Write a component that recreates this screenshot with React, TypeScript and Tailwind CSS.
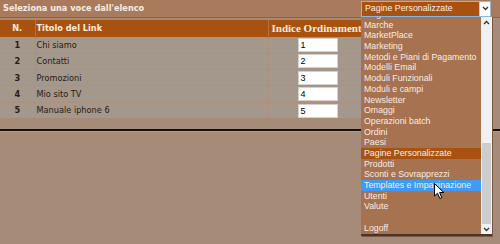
const rows = [
  { n: 1, title: 'Chi siamo' },
  { n: 2, title: 'Contatti' },
  { n: 3, title: 'Promozioni' },
  { n: 4, title: 'Mio sito TV' },
  { n: 5, title: 'Manuale iphone 6' },
];

const items = [
  'Magazzino',
  'Marche',
  'MarketPlace',
  'Marketing',
  'Metodi e Piani di Pagamento',
  'Modelli Email',
  'Moduli Funzionali',
  'Moduli e campi',
  'Newsletter',
  'Omaggi',
  'Operazioni batch',
  'Ordini',
  'Paesi',
  'Pagine Personalizzate',
  'Prodotti',
  'Sconti e Sovrapprezzi',
  'Templates e Impaginazione',
  'Utenti',
  'Valute',
  '',
  'Logoff',
];

const Chevron = ({ up = false }: { up?: boolean }) => (
  <svg width="7" height="5" viewBox="0 0 7 5" className={up ? 'rotate-180' : ''}>
    <path d="M1 1 L3.5 3.5 L6 1" fill="none" stroke="#333" strokeWidth="1.3" />
  </svg>
);

const Cursor = () => (
  <svg width="11" height="17" viewBox="0 0 11 17">
    <path d="M0.5 0.5 L0.5 13 L3.5 10.2 L5.8 15.5 L7.8 14.6 L5.6 9.5 L9.8 9.5 Z" fill="#fff" stroke="#000" strokeWidth="1" />
  </svg>
);

export default function App() {
  return (
    <div className="relative w-[500px] h-[244px] overflow-hidden bg-[#a68b78] font-['DejaVu_Sans',sans-serif]">
      {/* barra titolo */}
      <div className="h-[18px] flex items-center justify-between bg-[#a97b5c] border-b border-[#8d6248]">
        <span className="pl-[3px] text-[8.2px] font-bold text-[#f6ede6]">Seleziona una voce dall'elenco</span>
        <div className="mr-[9px] w-[130px] h-[16px] flex items-center border border-[#8fb6dd] bg-[#a9520f]">
          <span className="flex-1 pl-[3px] text-[8.8px] text-[#f7eee8] font-['Liberation_Sans',Arial,sans-serif]">
            Pagine Personalizzate
          </span>
          <span className="w-[11px] h-full flex items-center justify-center bg-white border-l border-[#c9c9c9]">
            <Chevron />
          </span>
        </div>
      </div>

      <table className="mt-[2px] w-[482px] border-collapse table-fixed">
        <colgroup>
          <col className="w-[35px]" />
          <col className="w-[233px]" />
          <col />
        </colgroup>
        <thead>
          <tr className="h-[12px] bg-[#a9520f] text-[#f8ece2]">
            <th className="text-[8.2px] font-bold text-center p-0">N.</th>
            <th className="text-[8.2px] font-bold text-left pl-[1px] p-0 border-l border-[#b8703a]">Titolo del Link</th>
            <th className="text-[11px] font-bold text-left pl-[3px] p-0 border-l border-[#b8703a] font-['Liberation_Serif',serif] whitespace-nowrap">
              Indice Ordinamento
            </th>
          </tr>
        </thead>
        <tbody>
          {rows.map((r) => (
            <tr key={r.n} className="h-[16.3px] bg-[#a4978c] border-t border-[#b0907b]">
              <td className="p-0 text-center text-[8.2px] font-bold text-[#2a1c12]">{r.n}</td>
              <td className="p-0 pl-[1px] text-[8.2px] text-[#2a1c12] border-l border-[#b0907b]">{r.title}</td>
              <td className="p-0 border-l border-[#b0907b]">
                <div className="ml-[29px] w-[40px] h-[14px] bg-white border border-[#d5d0cc] pl-[2px] text-[9px] leading-[13px] text-black font-['Liberation_Sans',Arial,sans-serif]">
                  {r.n}
                </div>
              </td>
            </tr>
          ))}
        </tbody>
      </table>

      <div className="mt-[11px] h-[2px] bg-[#141010]" />
      <div className="h-px bg-[#b89c88]" />

      {/* lista a discesa aperta */}
      <div className="absolute left-[361px] top-[17px] w-[131px] h-[219px] flex bg-[#a6724f] border-b-2 border-[#4a3628] shadow-[1px_1px_0_#7a5a46] font-['Liberation_Sans',Arial,sans-serif]">
        <div className="flex-1 overflow-hidden">
          <div className="-mt-[8px]">
            {items.map((it, i) => (
              <div
                key={i}
                className={`h-[10.7px] leading-[10.7px] pl-[3px] text-[8.8px] whitespace-nowrap text-[#f6ece4] ${
                  it === 'Pagine Personalizzate' ? 'bg-[#a9520f]' : it === 'Templates e Impaginazione' ? 'bg-[#3d9bf3]' : ''
                }`}
              >
                {it}
              </div>
            ))}
          </div>
        </div>
        <div className="w-[11px] flex flex-col bg-[#f1f1f1]">
          <div className="h-[10px] flex items-center justify-center">
            <Chevron up />
          </div>
          <div className="h-[116px]" />
          <div className="flex-1 mx-px bg-[#cdcdcd]" />
          <div className="h-[10px] flex items-center justify-center">
            <Chevron />
          </div>
        </div>
      </div>

      <div className="absolute left-[434px] top-[183px]">
        <Cursor />
      </div>
    </div>
  );
}
